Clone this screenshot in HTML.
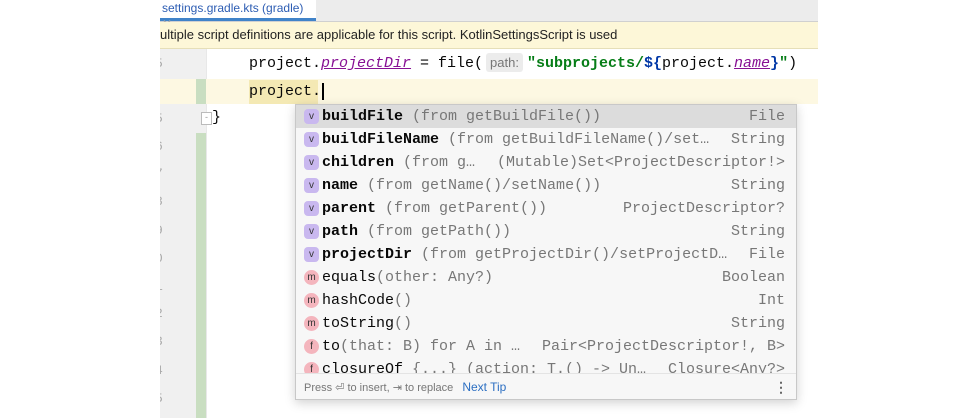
<!DOCTYPE html>
<html><head><meta charset="utf-8"><style>
body{margin:0;width:978px;height:418px;background:#fff;position:relative;overflow:hidden;font-family:"Liberation Sans",sans-serif}
.ed{position:absolute;left:160px;top:0;width:658px;height:418px;background:#fff;overflow:hidden}
.tabs{position:absolute;left:0;top:0;width:658px;height:21px;background:#ececec;border-bottom:1px solid #d0d0d0}
.tab{position:absolute;left:0;top:0;width:154px;height:18px;background:#fff;border-bottom:3px solid #4083c9;font-size:12px;color:#2d5db3;line-height:16px;padding-left:2px;box-sizing:content-box}
.ban{position:absolute;left:0;top:22px;width:658px;height:26px;background:#fdf7d8;border-bottom:1px solid #e6dfb8;font-size:13px;line-height:25px;color:#222;white-space:nowrap;overflow:hidden}
.gut{position:absolute;left:0;top:49px;width:46px;height:369px;background:#f0f0f0;overflow:hidden}
.gut span{position:absolute;left:-5px;font:13px "Liberation Mono",monospace;color:#aaa}
.green{position:absolute;left:36px;width:10px;background:#c9dec1}
.code{position:absolute;font:15px "Liberation Mono","DejaVu Sans Mono",monospace;color:#080808;white-space:pre}
.pop{position:absolute;left:295px;top:104px;width:500px;height:294px;background:#f7f7f7;border:1px solid #c8c8c8;box-shadow:0 3px 10px rgba(0,0,0,.18);overflow:hidden}
.row{position:absolute;left:0;width:500px;height:23px;font:15px "Liberation Mono","DejaVu Sans Mono",monospace;line-height:23px;color:#080808;white-space:pre}
.row .i{position:absolute;left:8px;top:4px;width:15px;height:15px;border-radius:4px;background:#c9b8ef;font:10px "Liberation Sans",sans-serif;line-height:15px;text-align:center;color:#333}
.row .i.m,.row .i.f{border-radius:8px;background:#f4b5bd}
.row .t{position:absolute;left:26px}
.row .r{position:absolute;right:11px;color:#777}
.g{color:#777}
.foot{position:absolute;left:0;top:268px;width:500px;height:26px;background:#f7f7f7;border-top:1px solid #e4e4e4;font-size:11px;line-height:26px;color:#777}
</style></head><body>
<div class="ed">
<div class="tabs"><div class="tab">settings.gradle.kts (gradle) <span style="color:#aaa">✕</span></div></div>
<div class="ban">ultiple script definitions are applicable for this script. KotlinSettingsScript is used</div>
<div class="gut">
<span style="top:7px">5</span><span style="top:35px">6</span><span style="top:62px">5</span><span style="top:90px">6</span><span style="top:117px">7</span><span style="top:145px">8</span><span style="top:174px">9</span><span style="top:202px">0</span><span style="top:230px">1</span><span style="top:257px">2</span><span style="top:285px">3</span><span style="top:314px">4</span><span style="top:342px">5</span>
</div>
<div style="position:absolute;left:46px;top:49px;width:612px;height:369px;border-left:1px solid #e8e8e8"></div>
<div style="position:absolute;left:0;top:79px;width:658px;height:25px;background:#fdf8e2"></div>
<div style="position:absolute;left:89px;top:80px;width:69px;height:24px;background:#f4e9b4"></div>
<div class="green" style="top:79px;height:25px;left:36px"></div>
<div class="green" style="top:133px;height:285px;left:36px"></div>
<div style="position:absolute;left:41px;top:112px;width:9px;height:11px;border:1px solid #bbb;background:#fff;font-size:9px;line-height:9px;text-align:center;color:#999">-</div>
<div class="code" style="left:89px;top:55px">project.<i style="color:#871094;text-decoration:underline">projectDir</i> = file(<span style="font:13px 'Liberation Sans',sans-serif;background:#ececec;color:#777;padding:2px 4px;border-radius:3px;margin:0 4px 0 3px">path:</span><b style="color:#067d17">"subprojects/</b><b style="color:#0037a6">${</b>project.<i style="color:#871094;text-decoration:underline">name</i><b style="color:#0037a6">}</b><b style="color:#067d17">"</b>)</div>
<div class="code" style="left:89px;top:83px">project.<span style="border-left:2px solid #000;margin-left:1px"> </span></div>
<div class="code" style="left:52px;top:109px">}</div>
</div>
<div class="pop">
<div class="row" style="top:0;background:#dcdcdc"><span class="i">v</span><span class="t"><b>buildFile</b> <span class="g">(from getBuildFile())</span></span><span class="r">File</span></div>
<div class="row" style="top:23px"><span class="i">v</span><span class="t"><b>buildFileName</b> <span class="g">(from getBuildFileName()/set…</span></span><span class="r">String</span></div>
<div class="row" style="top:46px"><span class="i">v</span><span class="t"><b>children</b> <span class="g">(from g…</span></span><span class="r">(Mutable)Set&lt;ProjectDescriptor!&gt;</span></div>
<div class="row" style="top:69px"><span class="i">v</span><span class="t"><b>name</b> <span class="g">(from getName()/setName())</span></span><span class="r">String</span></div>
<div class="row" style="top:92px"><span class="i">v</span><span class="t"><b>parent</b> <span class="g">(from getParent())</span></span><span class="r">ProjectDescriptor?</span></div>
<div class="row" style="top:115px"><span class="i">v</span><span class="t"><b>path</b> <span class="g">(from getPath())</span></span><span class="r">String</span></div>
<div class="row" style="top:138px"><span class="i">v</span><span class="t"><b>projectDir</b> <span class="g">(from getProjectDir()/setProjectD…</span></span><span class="r">File</span></div>
<div class="row" style="top:161px"><span class="i m">m</span><span class="t">equals<span class="g">(other: Any?)</span></span><span class="r">Boolean</span></div>
<div class="row" style="top:184px"><span class="i m">m</span><span class="t">hashCode<span class="g">()</span></span><span class="r">Int</span></div>
<div class="row" style="top:207px"><span class="i m">m</span><span class="t">toString<span class="g">()</span></span><span class="r">String</span></div>
<div class="row" style="top:230px"><span class="i f">f</span><span class="t">to<span class="g">(that: B) for A in …</span></span><span class="r">Pair&lt;ProjectDescriptor!, B&gt;</span></div>
<div class="row" style="top:253px"><span class="i f">f</span><span class="t">closureOf<span class="g"> {...} (action: T.() -&gt; Un…</span></span><span class="r">Closure&lt;Any?&gt;</span></div>
<div class="foot"><span style="margin-left:8px">Press ⏎ to insert, ⇥ to replace</span> <span style="color:#2c6fc2;margin-left:6px;font-size:12px">Next Tip</span><span style="position:absolute;right:8px;top:0;color:#666;font-size:14px;font-weight:bold">⋮</span></div>
</div>
</body></html>
